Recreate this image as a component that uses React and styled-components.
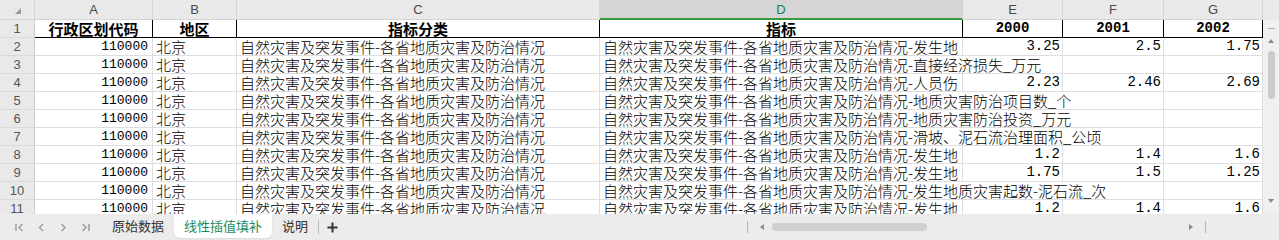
import React from "react";
import styled, { createGlobalStyle } from "styled-components";

const GlobalStyle = createGlobalStyle`
  html, body { margin: 0; padding: 0; background: #fff; }
  body { font-family: "Noto Sans CJK SC", "Noto Sans", sans-serif; }
`;

const LETTERS = ["A", "B", "C", "D", "E", "F", "G"];
const PREFIX = "自然灾害及突发事件-各省地质灾害及防治情况";

const titles = [
  { text: "行政区划代码" },
  { text: "地区" },
  { text: "指标分类" },
  { text: "指标" },
  { text: "2000", num: true },
  { text: "2001", num: true },
  { text: "2002", num: true },
];

const rows = [
  { d: "-发生地", v: ["3.25", "2.5", "1.75"] },
  { d: "-直接经济损失_万元", span: 2 },
  { d: "-人员伤", v: ["2.23", "2.46", "2.69"] },
  { d: "-地质灾害防治项目数_个", span: 3 },
  { d: "-地质灾害防治投资_万元", span: 3 },
  { d: "-滑坡、泥石流治理面积_公顷", span: 3 },
  { d: "-发生地", v: ["1.2", "1.4", "1.6"] },
  { d: "-发生地", v: ["1.75", "1.5", "1.25"] },
  { d: "-发生地质灾害起数-泥石流_次", span: 3 },
  { d: "-发生地", v: ["1.2", "1.4", "1.6"] },
];

export default function App() {
  return (
    <Window>
      <GlobalStyle />
      <Main>
        <Sheet>
          <Corner>
            <CornerMark />
          </Corner>
          {LETTERS.map((l) => (
            <ColHead key={l} $active={l === "D"}>
              {l}
            </ColHead>
          ))}

          <RowHead>1</RowHead>
          {titles.map((t) => (
            <TitleCell key={t.text} $num={t.num}>
              {t.text}
            </TitleCell>
          ))}

          {rows.map((r, i) => {
            const span = r.span || 1;
            const empty = 4 - span - (r.v ? 3 : 0);
            return (
              <React.Fragment key={i}>
                <RowHead>{i + 2}</RowHead>
                <Cell $num $size={13} $align="right" $pad={4}>
                  110000
                </Cell>
                <Cell>北京</Cell>
                <Cell>{PREFIX}</Cell>
                <Cell $span={span} $clip={!!r.v}>
                  {PREFIX + r.d}
                </Cell>
                {r.v &&
                  r.v.map((v, j) => (
                    <Cell key={j} $num $align="right" $pad={2}>
                      {v}
                    </Cell>
                  ))}
                {Array.from({ length: empty }).map((_, j) => (
                  <Cell key={"e" + j} />
                ))}
              </React.Fragment>
            );
          })}
        </Sheet>

        <VScroll>
          <ScrollTop />
          <ScrollDash />
          <ArrowUp />
          <VThumb />
          <Spacer />
          <ArrowDown />
        </VScroll>
      </Main>

      <TabBar>
        <Nav>
          <NavIcon viewBox="0 0 9 9">
            <line x1="1" y1="1" x2="1" y2="8" />
            <polyline points="7.5,1 4,4.5 7.5,8" />
          </NavIcon>
          <NavIcon viewBox="0 0 9 9">
            <polyline points="6,1 2.5,4.5 6,8" />
          </NavIcon>
          <NavIcon viewBox="0 0 9 9">
            <polyline points="2.5,1 6,4.5 2.5,8" />
          </NavIcon>
          <NavIcon viewBox="0 0 9 9">
            <polyline points="1.5,1 5,4.5 1.5,8" />
            <line x1="8" y1="1" x2="8" y2="8" />
          </NavIcon>
        </Nav>
        <Tabs>
          <Tab>原始数据</Tab>
          <Tab $active>线性插值填补</Tab>
          <Tab>说明</Tab>
          <TabDivider />
          <AddIcon viewBox="0 0 11 11">
            <line x1="5.5" y1="0.5" x2="5.5" y2="10.5" />
            <line x1="0.5" y1="5.5" x2="10.5" y2="5.5" />
          </AddIcon>
        </Tabs>
        <HScroll>
          <HMark />
          <ArrowLeft />
          <HTrack>
            <HThumb />
          </HTrack>
          <ArrowRight />
          <HMark $gap={12} />
        </HScroll>
      </TabBar>
    </Window>
  );
}

const Window = styled.div`
  width: 1279px;
  height: 240px;
  display: flex;
  flex-direction: column;
  overflow: hidden;
  background: #fff;
`;

const Main = styled.div`
  display: flex;
  height: 214px;
`;

const Sheet = styled.div`
  width: 1263px;
  height: 214px;
  overflow: hidden;
  display: grid;
  grid-template-columns: 35px 118px 84px 363px 363px 100px 101px 99px;
  grid-template-rows: 20px;
  grid-auto-rows: 18px;
  align-content: start;
`;

const Corner = styled.div`
  background: #e9e9e9;
  border-right: 1px solid #d4d4d4;
  border-bottom: 1px solid #d4d4d4;
  box-sizing: border-box;
  display: flex;
  justify-content: flex-end;
  align-items: flex-end;
  padding: 0 13px 5px 0;
`;

const CornerMark = styled.div`
  width: 6px;
  height: 6px;
  background: #9a9a9a;
  clip-path: polygon(100% 0, 100% 100%, 0 100%);
`;

const ColHead = styled.div`
  box-sizing: border-box;
  background: ${(p) => (p.$active ? "#d5d5d5" : "#e9e9e9")};
  border-right: 1px solid #d4d4d4;
  border-bottom: ${(p) => (p.$active ? "2px solid #3c9a3c" : "1px solid #d4d4d4")};
  color: ${(p) => (p.$active ? "#1b8060" : "#4a4a4a")};
  font: 13px/19px "Liberation Sans", Arial, sans-serif;
  text-align: center;
`;

const RowHead = styled.div`
  box-sizing: border-box;
  background: #e9e9e9;
  border-right: 1px solid #d0d0d0;
  border-bottom: 1px solid #dadada;
  color: #555;
  font: 13px/17px "Liberation Sans", Arial, sans-serif;
  text-align: center;
`;

const TitleCell = styled.div`
  box-sizing: border-box;
  border-right: 1px solid #000;
  border-bottom: 1px solid #000;
  font-family: ${(p) => (p.$num ? '"Liberation Mono", monospace' : '"Noto Sans CJK SC", sans-serif')};
  font-size: ${(p) => (p.$num ? 14 : 15)}px;
  font-weight: bold;
  line-height: 17px;
  text-align: center;
  white-space: nowrap;
  color: #000;
`;

const Cell = styled.div`
  box-sizing: border-box;
  grid-column: span ${(p) => p.$span || 1};
  border-right: 1px solid #dedede;
  border-bottom: 1px solid #dedede;
  padding: 0 ${(p) => p.$pad || 3}px;
  text-align: ${(p) => p.$align || "left"};
  font-family: ${(p) => (p.$num ? '"Liberation Mono", monospace' : '"Noto Sans CJK SC", sans-serif')};
  font-size: ${(p) => p.$size || (p.$num ? 14 : 15)}px;
  font-weight: ${(p) => (p.$num ? 400 : 300)};
  line-height: 17px;
  white-space: nowrap;
  overflow: ${(p) => (p.$clip ? "hidden" : "visible")};
  color: #000;
`;

const VScroll = styled.div`
  width: 16px;
  display: flex;
  flex-direction: column;
  align-items: center;
  background: #f0f0f0;
`;

const ScrollTop = styled.div`
  align-self: stretch;
  height: 20px;
  background: #e9e9e9;
`;

const ScrollDash = styled.div`
  width: 7px;
  height: 1px;
  margin-top: 8px;
  background: #b0b0b0;
`;

const ArrowUp = styled.div`
  margin-top: 10px;
  border-left: 3px solid transparent;
  border-right: 3px solid transparent;
  border-bottom: 4px solid #8a8a8a;
`;

const ArrowDown = styled.div`
  margin-bottom: 11px;
  border-left: 3px solid transparent;
  border-right: 3px solid transparent;
  border-top: 4px solid #8a8a8a;
`;

const VThumb = styled.div`
  width: 7px;
  height: 48px;
  margin-top: 8px;
  border-radius: 4px;
  background: #cbcbcb;
`;

const Spacer = styled.div`
  flex: 1;
`;

const TabBar = styled.div`
  height: 26px;
  display: flex;
  align-items: stretch;
  background: #ececec;
`;

const Nav = styled.div`
  display: flex;
  align-items: center;
  gap: 13px;
  padding-left: 15px;
`;

const NavIcon = styled.svg`
  width: 9px;
  height: 9px;
  fill: none;
  stroke: #9a9a9a;
  stroke-width: 1.4;
`;

const Tabs = styled.div`
  display: flex;
  align-items: flex-start;
  margin-left: 12px;
`;

const Tab = styled.div`
  height: 24px;
  padding: 0 10px;
  font: 13px/24px "Noto Sans CJK SC", sans-serif;
  color: ${(p) => (p.$active ? "#1a8a5c" : "#333")};
  background: ${(p) => (p.$active ? "#fff" : "transparent")};
  border-radius: 0 0 6px 6px;
  box-shadow: ${(p) => (p.$active ? "0 1px 2px rgba(0,0,0,0.08)" : "none")};
`;

const TabDivider = styled.div`
  width: 1px;
  height: 14px;
  margin-top: 6px;
  background: #bdbdbd;
`;

const AddIcon = styled.svg`
  width: 11px;
  height: 11px;
  margin: 8px 0 0 8px;
  stroke: #333;
  stroke-width: 2;
`;

const HScroll = styled.div`
  margin-left: auto;
  width: 534px;
  box-sizing: border-box;
  padding: 0 73px 0 2px;
  display: flex;
  align-items: center;
`;

const HMark = styled.div`
  width: 1px;
  height: 12px;
  margin-left: ${(p) => p.$gap || 0}px;
  background: #b5b5b5;
`;

const ArrowLeft = styled.div`
  margin-left: 12px;
  border-top: 3px solid transparent;
  border-bottom: 3px solid transparent;
  border-right: 4px solid #8a8a8a;
`;

const ArrowRight = styled.div`
  border-top: 3px solid transparent;
  border-bottom: 3px solid transparent;
  border-left: 4px solid #8a8a8a;
`;

const HTrack = styled.div`
  flex: 1;
  margin: 0 4px 0 8px;
  display: flex;
`;

const HThumb = styled.div`
  width: 155px;
  height: 8px;
  border-radius: 4px;
  background: #cfcfcf;
`;
